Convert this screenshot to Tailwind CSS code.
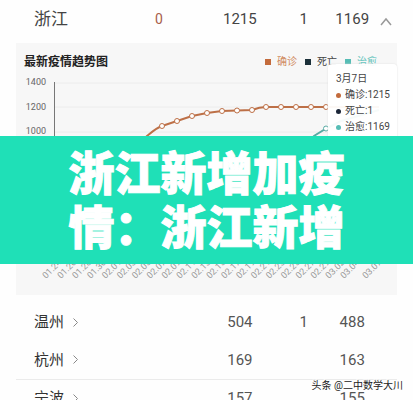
<!DOCTYPE html>
<html lang="zh-CN">
<head>
<meta charset="utf-8">
<meta name="viewport" content="width=device-width, initial-scale=1">
<title>浙江新增加疫情</title>
<script src="https://cdn.jsdelivr.net/npm/@tailwindcss/browser@4"></script>
</head>
<body class="bg-white">
<main class="relative h-screen overflow-hidden bg-[#fefefe] px-4 font-[Roboto,'Noto_Sans_CJK_SC',sans-serif] text-[#555]">
  <table class="w-full table-fixed border-collapse text-center text-[15px]">
    <colgroup>
      <col class="w-[27%]"><col class="w-[21%]"><col class="w-[21%]"><col class="w-[13%]"><col class="w-[12%]"><col class="w-[6%]">
    </colgroup>
    <tbody>
      <tr class="h-[43px] text-[#444]">
        <th scope="row" class="pb-[6px] pl-[18px] text-left text-[17px] leading-6 font-normal">浙江</th>
        <td class="pb-[6px] text-sm leading-6 text-[#a8604a]">0</td>
        <td class="pb-[6px] pl-[2px] leading-6">1215</td>
        <td class="pb-[6px] leading-6">1</td>
        <td class="pb-[6px] pl-[2px] leading-6">1169</td>
        <td class="p-0">
          <button type="button" aria-label="收起" class="mx-auto block">
            <svg class="block h-3 w-3" viewBox="0 0 12 12" fill="none" stroke="#999" stroke-width="1.5"><path d="M1 9 6 3l5 6"/></svg>
          </button>
        </td>
      </tr>
      <tr>
        <td colspan="6" class="p-0">
          <section class="relative bg-[#f7f7f7]">
            <header class="flex h-[34px] items-center justify-between pt-[3px] pr-5 pl-2">
              <h2 class="text-xs font-bold text-[#222]">最新疫情趋势图</h2>
              <ul class="flex gap-2 text-[10px] leading-4">
                <li class="flex items-center gap-[6px] text-[#d08a60]"><span class="size-[6px] bg-[#c36b3c]"></span>确诊</li>
                <li class="flex items-center gap-[6px] text-[#444]"><span class="size-[6px] bg-[#1b3039]"></span>死亡</li>
                <li class="flex items-center gap-[6px] text-[#62c4bc]"><span class="size-[6px] bg-[#56bdb5]"></span>治愈</li>
              </ul>
            </header>
            <svg id="chart" class="block h-auto w-full" viewBox="0 0 381 218" fill="none">
              <path d="M39 6H369M39 30H369M39 55H369M39 79H369M39 104H369M39 128H369M39 153H369" stroke="#ececec"/>
              <path d="M38.500 5V178" stroke="#777"/>
              <g fill="#666" font-size="9" text-anchor="end">
                <text x="30" y="8">1400</text><text x="30" y="33">1200</text><text x="30" y="57">1000</text><text x="30" y="82">800</text><text x="30" y="106">600</text><text x="30" y="131">400</text><text x="30" y="155">200</text>
              </g>
              <path d="M40 176 70 155 100 110 130 60 C137 54 140 51 146 49L161 44 176 39 191 36 206 34 221 33.500 236 33C241 31 244 30 250 30H363" stroke="#bd7047" stroke-width="2"/>
              <path d="M220 150 250 115 280 78 298 59 310 51.500 325 44 363 33" stroke="#56aaa3" stroke-width="2"/>
              <g fill="#fff" stroke="#bd7047">
                <circle cx="146" cy="49" r="2.500"/><circle cx="161" cy="44" r="2.500"/><circle cx="176" cy="39" r="2.500"/><circle cx="191" cy="36" r="2.500"/><circle cx="206" cy="34" r="2.500"/><circle cx="221" cy="33.500" r="2.500"/><circle cx="236" cy="33" r="2.500"/><circle cx="250" cy="30" r="2.500"/><circle cx="265" cy="30" r="2.500"/><circle cx="280" cy="30" r="2.500"/><circle cx="295" cy="30" r="2.500"/><circle cx="310" cy="30" r="2.500"/>
              </g>
              <circle cx="310" cy="51.500" r="2.500" fill="#fff" stroke="#56aaa3"/>
              <g id="dates" fill="#999" font-size="9"></g>
            </svg>
            <aside class="absolute top-[21px] right-0 w-[69px] rounded-sm bg-white/95 py-[7px] pl-2 text-left text-[10px] leading-4 text-[#444] shadow-[0_0_2px_#ddd]">
              <p>3月7日</p>
              <p class="flex items-center gap-1"><span class="size-[5px] rounded-full bg-[#c36b3c]"></span>确诊:1215</p>
              <p class="flex items-center gap-1"><span class="size-[5px] rounded-full bg-[#1b2638]"></span>死亡:1</p>
              <p class="flex items-center gap-1"><span class="size-[5px] rounded-full bg-[#56bdb5]"></span>治愈:1169</p>
            </aside>
          </section>
        </td>
      </tr>
      <tr><td colspan="6" class="h-2 p-0"></td></tr>
      <tr class="h-[38px]">
        <th scope="row" class="pl-[18px] text-left leading-6 font-normal text-[#333]"><a href="#" class="flex items-center gap-[9px]">温州<svg class="h-[9px] w-[5px]" viewBox="0 0 5 9" fill="none" stroke="#888"><path d="M.5.5 4.500 4.500.5 8.500"/></svg></a></th>
        <td></td><td class="pl-[2px]">504</td><td>1</td><td class="pl-[2px]">488</td><td></td>
      </tr>
      <tr class="h-[38px]">
        <th scope="row" class="pl-[18px] text-left leading-6 font-normal text-[#333]"><a href="#" class="flex items-center gap-[9px]">杭州<svg class="h-[9px] w-[5px]" viewBox="0 0 5 9" fill="none" stroke="#888"><path d="M.5.5 4.500 4.500.5 8.500"/></svg></a></th>
        <td></td><td class="pl-[2px]">169</td><td></td><td class="pl-[2px]">163</td><td></td>
      </tr>
      <tr class="h-[38px] border-t border-[#ebebeb]">
        <th scope="row" class="pl-[18px] text-left leading-6 font-normal text-[#333]"><a href="#" class="flex items-center gap-[9px]">宁波<svg class="h-[9px] w-[5px]" viewBox="0 0 5 9" fill="none" stroke="#888"><path d="M.5.5 4.500 4.500.5 8.500"/></svg></a></th>
        <td></td><td class="pl-[2px]">157</td><td></td><td class="pl-[2px]">155</td><td></td>
      </tr>
    </tbody>
  </table>

  <div class="absolute inset-x-0 top-[136px] flex h-32 items-center justify-center bg-[#1fe0b7] pb-[6px]">
    <h1 class="w-[276px] font-['Noto_Sans_CJK_SC',sans-serif] text-[46px] leading-[54px] font-black text-white [-webkit-text-stroke:1px_white]">浙江新增加疫情：浙江新增</h1>
  </div>
  <p class="absolute right-[10px] bottom-[6px] text-[10px] leading-4 text-[#222] [text-shadow:0_0_1px_#fff,1px_1px_0_#fff,-1px_-1px_0_#fff]">头条 @二中数学大川</p>
</main>
<script>
  const dates = ['01.24','01.26','01.28','01.30','02.01','02.03','02.05','02.07','02.09','02.11','02.13','02.15','02.17','02.19','02.21','02.23','02.25','02.27','02.29','03.02','03.04','03.07'];
  document.getElementById('dates').innerHTML = dates.map((d, i) => {
    const x = i === dates.length - 1 ? 350 : 30 + i * 14.9;
    return `<text transform="translate(${x} 202) rotate(-45)">${d}</text>`;
  }).join('');
</script>
</body>
</html>
